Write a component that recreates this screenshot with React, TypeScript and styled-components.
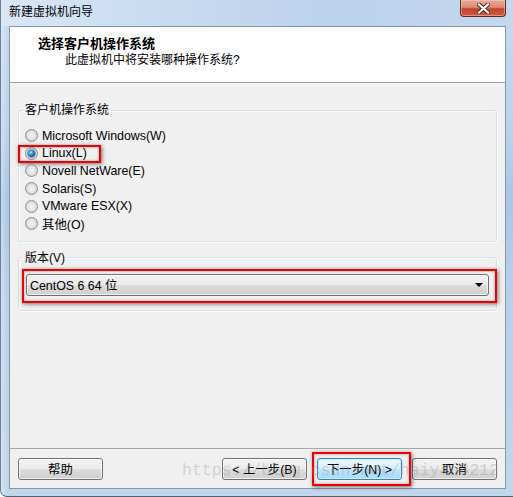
import React from "react";
import styled, { createGlobalStyle } from "styled-components";

const Global = createGlobalStyle`
  html, body { margin: 0; padding: 0; background: #ffffff; }
  * { box-sizing: border-box; }
`;

const FONT = `"Liberation Sans", "Noto Sans CJK SC", sans-serif`;

const Frame = styled.div`
  width: 513px;
  height: 497px;
  display: flex;
  flex-direction: column;
  padding: 0 7px 7px 8px;
  border-left: 1px solid #6f8094;
  border-bottom: 1px solid #52606f;
  border-bottom-left-radius: 7px;
  background:
    linear-gradient(to right, rgba(255,255,255,0.35), rgba(255,255,255,0) 6px),
    linear-gradient(180deg, #c7dbf1 0%, #bcd3ec 25%, #a9c7e8 40%, #b9d0ea 60%, #c2d6ec 100%);
  font-family: ${FONT};
  font-size: 12px;
  color: #000;
  overflow: hidden;
`;

const TitleBar = styled.div`
  height: 26px;
  flex: none;
  display: flex;
  justify-content: space-between;
  align-items: flex-start;
  margin: 0 -7px 0 -8px;
  padding: 0 7px 0 8px;
  background: linear-gradient(to right, #d9e7f6 0%, #c6daf0 35%, #bcd2eb 65%, #c3d7ee 100%);
`;

const Caption = styled.div`
  padding-top: 4px;
  line-height: 16px;
  font-size: 12px;
  color: #000;
`;

const CloseButton = styled.div`
  width: 46px;
  height: 17px;
  display: flex;
  align-items: center;
  justify-content: center;
  border: 1px solid #5b2a22;
  border-top: none;
  border-radius: 0 0 4px 4px;
  background: linear-gradient(180deg, #e9a897 0%, #dc8a76 45%, #c4442b 55%, #d05a3e 100%);
  box-shadow: inset 0 0 0 1px rgba(255, 220, 210, 0.45);
`;

const Client = styled.div`
  flex: 1;
  display: flex;
  flex-direction: column;
  border: 1px solid #8797a8;
  background: #f0f0f0;
`;

const Header = styled.div`
  height: 56px;
  flex: none;
  background: #ffffff;
  border-bottom: 1px solid #a0a0a0;
  padding: 8px 0 0 28px;
`;

const HeaderTitle = styled.div`
  font-family: "Noto Sans CJK SC", sans-serif;
  font-weight: 700;
  font-size: 13px;
  line-height: 16px;
`;

const HeaderSub = styled.div`
  margin: 1px 0 0 27px;
  font-size: 12px;
  line-height: 16px;
`;

const Body = styled.div`
  flex: 1;
  padding: 19px 8px 0 8px;
  display: flex;
  flex-direction: column;
`;

const Group = styled.fieldset<{ $gap?: number; $bottom: number }>`
  margin: ${(p) => p.$gap ?? 0}px 0 0 0;
  padding: 0 7px ${(p) => p.$bottom}px 7px;
  border: 1px solid #d5dfe5;
  border-radius: 3px;
  box-shadow: inset 1px 1px 0 #fbfcfd, 1px 1px 0 #fbfcfd;
  min-width: 0;
`;

const Legend = styled.legend`
  margin-left: -3px;
  padding: 0 2px;
  line-height: 16px;
  font-size: 12px;
`;

const RadioList = styled.div`
  margin-top: 9px;
  margin-left: -1px;
  display: flex;
  flex-direction: column;
  align-items: flex-start;
`;

const RadioRow = styled.div`
  position: relative;
  height: 17.6px;
  display: inline-flex;
  align-items: center;
  gap: 4px;
  white-space: nowrap;
  font-size: 12.4px;
`;

const RadioCircle = styled.span<{ $checked?: boolean }>`
  width: 13px;
  height: 13px;
  border-radius: 50%;
  border: 1px solid #8e8f8f;
  background: radial-gradient(circle at 50% 50%, #f4f4f4 0%, #e6e6e6 45%, #d3d3d3 70%, #f8f8f8 100%);
  display: flex;
  align-items: center;
  justify-content: center;
  flex: none;
  &::after {
    content: "";
    display: ${(p) => (p.$checked ? "block" : "none")};
    width: 7px;
    height: 7px;
    border-radius: 50%;
    background: radial-gradient(circle at 40% 35%, #b9e2ff 0%, #3a92d8 35%, #0f4f93 80%, #0c3e78 100%);
    box-shadow: 0 0 0 0.5px #23466b;
  }
`;

const RedMark = styled.span<{ $t: number; $r: number; $b: number; $l: number }>`
  position: absolute;
  top: ${(p) => p.$t}px;
  right: ${(p) => p.$r}px;
  bottom: ${(p) => p.$b}px;
  left: ${(p) => p.$l}px;
  border: 2px solid #f00000;
  box-shadow: 1px 1px 4px rgba(0, 0, 0, 0.55), inset 0 0 3px rgba(0, 0, 0, 0.35);
  pointer-events: none;
`;

const Marked = styled.div<{ $top?: number }>`
  position: relative;
  margin-top: ${(p) => p.$top ?? 0}px;
`;

const Select = styled.div`
  height: 22px;
  display: flex;
  align-items: center;
  justify-content: space-between;
  padding: 0 5px 0 3px;
  border: 1px solid #707070;
  border-radius: 3px;
  background: linear-gradient(180deg, #f2f2f2 0%, #ebebeb 50%, #dddddd 51%, #cfcfcf 100%);
  box-shadow: inset 0 0 0 1px rgba(255, 255, 255, 0.7);
  font-size: 12.4px;
`;

const Arrow = styled.span`
  width: 0;
  height: 0;
  border-left: 4px solid transparent;
  border-right: 4px solid transparent;
  border-top: 4px solid #000;
`;

const Footer = styled.div`
  position: relative;
  flex: none;
  border-top: 1px solid #a8a8a8;
  padding: 9px 8px 8px 8px;
  display: flex;
  justify-content: space-between;
`;

const ButtonRow = styled.div`
  display: flex;
  gap: 10px;
`;

const Button = styled.div<{ $default?: boolean }>`
  width: 85px;
  height: 22px;
  display: flex;
  align-items: center;
  justify-content: center;
  border: 1px solid ${(p) => (p.$default ? "#3c7fb1" : "#707070")};
  border-radius: 3px;
  background: ${(p) =>
    p.$default
      ? "linear-gradient(180deg, #eaf6fd 0%, #d9f0fc 50%, #bee6fd 51%, #a7d9f5 100%)"
      : "linear-gradient(180deg, #f2f2f2 0%, #ebebeb 50%, #dddddd 51%, #cfcfcf 100%)"};
  box-shadow: inset 0 0 0 1px ${(p) => (p.$default ? "rgba(200, 240, 255, 0.9)" : "rgba(255, 255, 255, 0.7)")};
  font-size: 12.4px;
  white-space: nowrap;
`;

const Watermark = styled.div`
  position: absolute;
  left: 172px;
  top: 13px;
  font-family: "Liberation Mono", "DejaVu Sans Mono", monospace;
  font-size: 16.5px;
  line-height: 18px;
  color: rgba(140, 140, 140, 0.32);
  pointer-events: none;
  white-space: nowrap;
`;

const osList = [
  "Microsoft Windows(W)",
  "Linux(L)",
  "Novell NetWare(E)",
  "Solaris(S)",
  "VMware ESX(X)",
  "其他(O)",
];

export default function App() {
  return (
    <>
      <Global />
      <Frame>
        <TitleBar>
          <Caption>新建虚拟机向导</Caption>
          <CloseButton>
            <svg width="13" height="11" viewBox="0 0 13 11">
              <path d="M2 1.5 L11 9.5 M11 1.5 L2 9.5" stroke="#4a2a24" strokeWidth="4" strokeLinecap="square" />
              <path d="M2 1.5 L11 9.5 M11 1.5 L2 9.5" stroke="#ffffff" strokeWidth="2.2" strokeLinecap="square" />
            </svg>
          </CloseButton>
        </TitleBar>
        <Client>
          <Header>
            <HeaderTitle>选择客户机操作系统</HeaderTitle>
            <HeaderSub>此虚拟机中将安装哪种操作系统?</HeaderSub>
          </Header>
          <Body>
            <Group $bottom={8}>
              <Legend>客户机操作系统</Legend>
              <RadioList>
                {osList.map((name) => (
                  <RadioRow key={name}>
                    <RadioCircle $checked={name === "Linux(L)"} />
                    <span>{name}</span>
                    {name === "Linux(L)" && <RedMark $t={0} $r={-14} $b={-1} $l={-7} />}
                  </RadioRow>
                ))}
              </RadioList>
            </Group>
            <Group $gap={8} $bottom={14}>
              <Legend>版本(V)</Legend>
              <Marked $top={8}>
                <Select>
                  <span>CentOS 6 64 位</span>
                  <Arrow />
                </Select>
                <RedMark $t={-5} $r={-8} $b={-7} $l={-4} />
              </Marked>
            </Group>
          </Body>
          <Footer>
            <Button>帮助</Button>
            <ButtonRow>
              <Button>&lt; 上一步(B)</Button>
              <Marked>
                <Button $default>下一步(N) &gt;</Button>
                <RedMark $t={-6} $r={-9} $b={-6} $l={-5} />
              </Marked>
              <Button>取消</Button>
            </ButtonRow>
            <Watermark>https://blog.csdn.net/haiyan8212</Watermark>
          </Footer>
        </Client>
      </Frame>
    </>
  );
}
